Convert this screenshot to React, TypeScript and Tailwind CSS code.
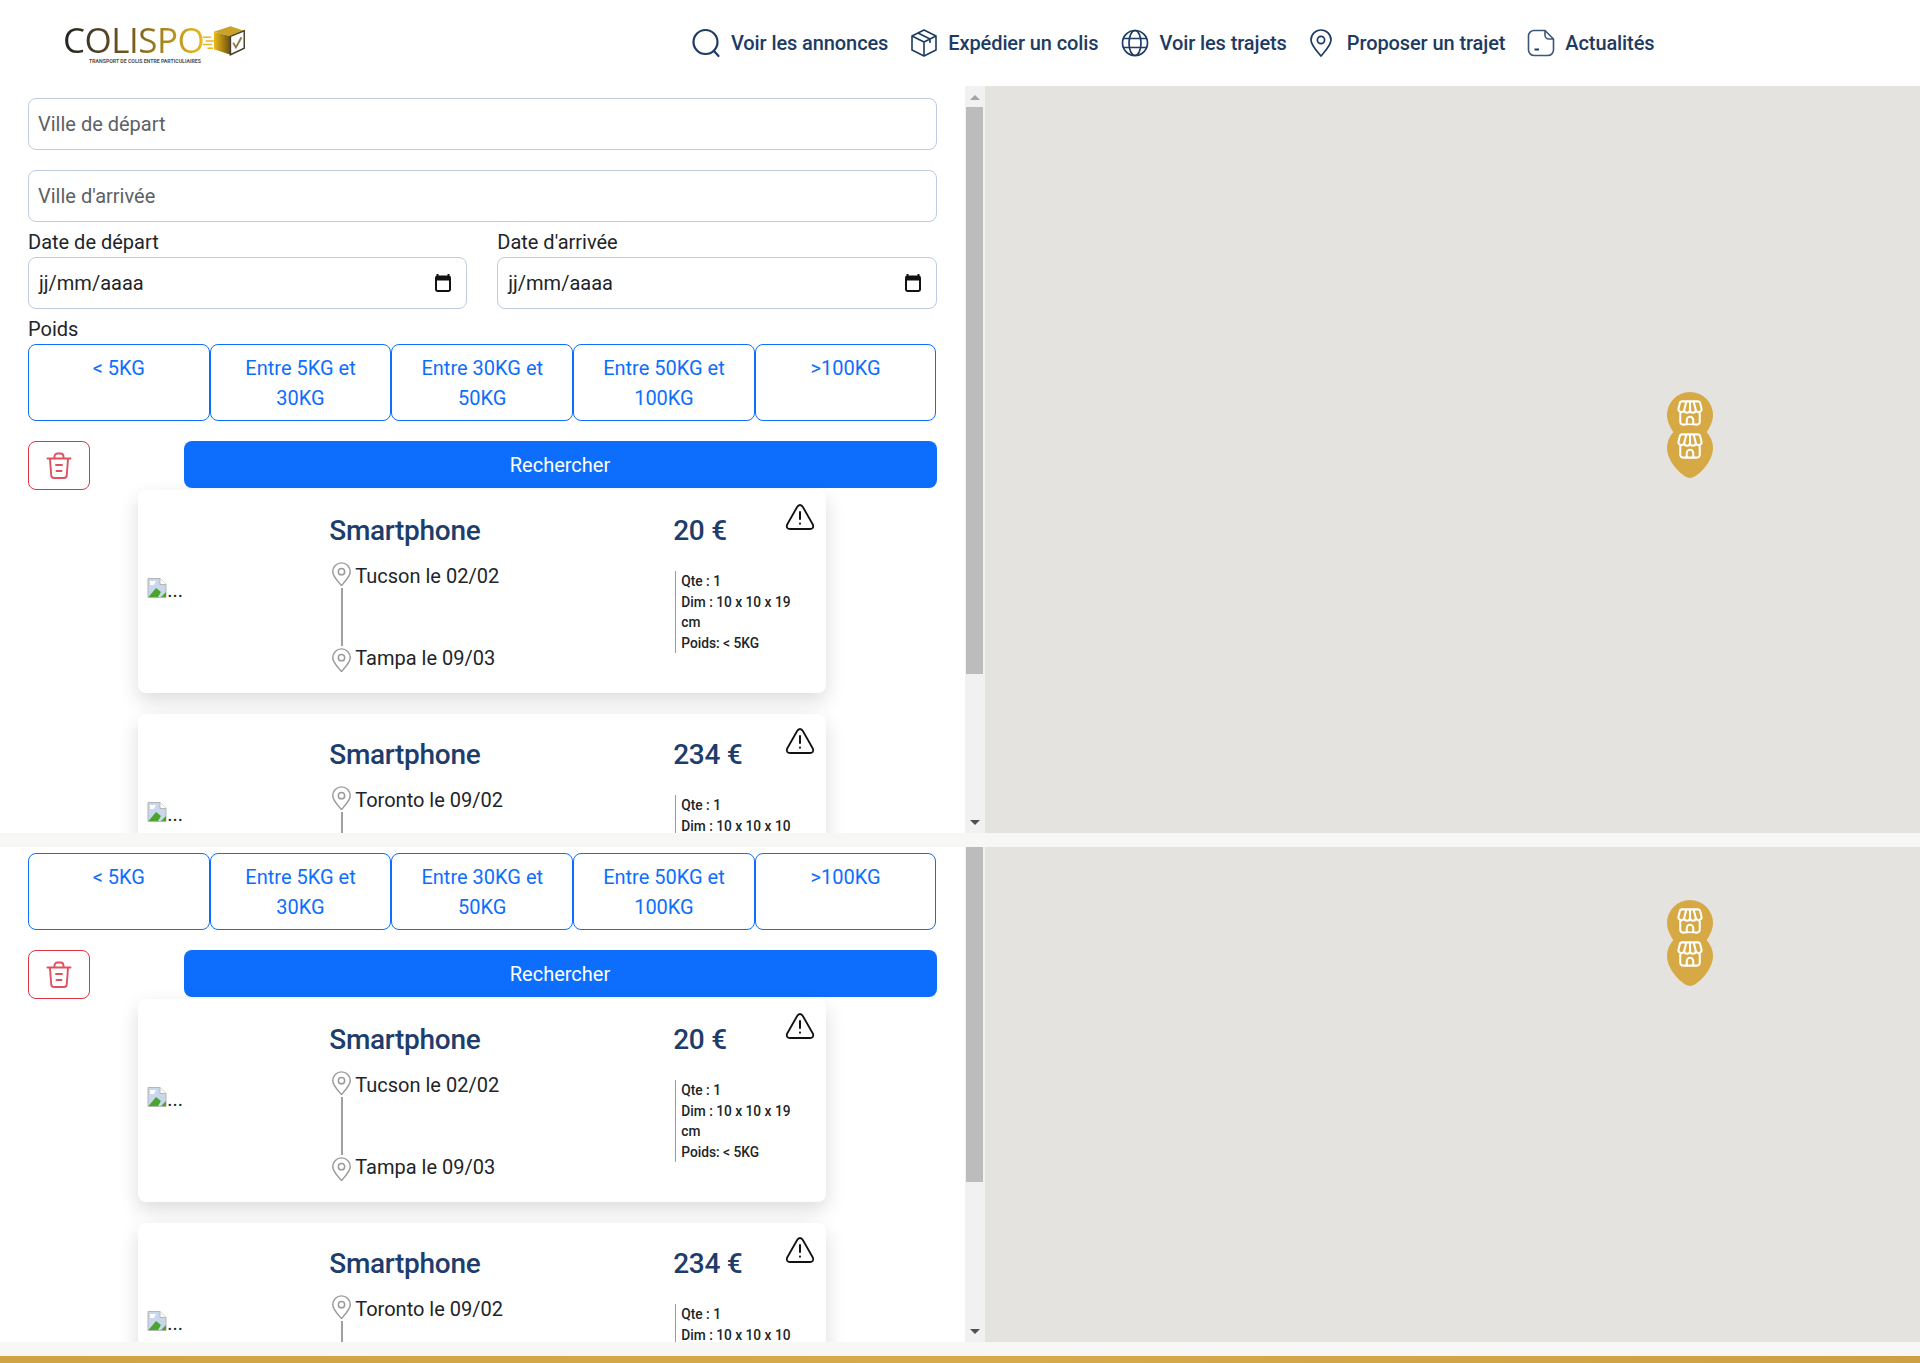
const WEIGHTS = ["< 5KG", "Entre 5KG et 30KG", "Entre 30KG et 50KG", "Entre 50KG et 100KG", ">100KG"];

const font = { fontFamily: "Roboto, sans-serif" };

type Offer = {
  price: string;
  from: string;
  to?: string;
  details: string[];
};

const OFFERS: Offer[] = [
  {
    price: "20 €",
    from: "Tucson le 02/02",
    to: "Tampa le 09/03",
    details: ["Qte : 1", "Dim : 10 x 10 x 19 cm", "Poids: < 5KG"],
  },
  {
    price: "234 €",
    from: "Toronto le 09/02",
    details: ["Qte : 1", "Dim : 10 x 10 x 10"],
  },
];

function Logo() {
  return (
    <div className="flex items-start">
      <div className="flex flex-col">
        <span
          className="bg-linear-to-r from-[#222222] via-[#7a5e1c] to-[#ecbc1a] bg-clip-text text-[35px] leading-[36px] tracking-[-0.5px] text-transparent"
          style={{ fontFamily: "'Open Sans', sans-serif" }}
        >
          COLISPO
        </span>
        <span className="pl-[26px] text-[5.2px] leading-[6px] font-bold whitespace-nowrap text-[#55504a]">
          TRANSPORT DE COLIS ENTRE PARTICULIAIRES
        </span>
      </div>
      <svg width="46" height="32" viewBox="0 0 50 34" className="mt-[2px] ml-[-3px]">
        <defs>
          <linearGradient id="boxfill" x1="0" x2="1" y1="0" y2="0">
            <stop offset="0" stopColor="#ecbc1a" />
            <stop offset="1" stopColor="#6b4f10" />
          </linearGradient>
        </defs>
        <path d="M2 14h9M5 18h9M2 22h10M7 26h6" stroke="#e8b81c" strokeWidth="1.6" />
        <path d="M14 8 L32 2 L47 7 L32 13 Z" fill="#c9a227" />
        <path d="M14 8 L32 13 V33 L14 27 Z" fill="url(#boxfill)" />
        <path d="M32 13 L47 7 V26 L32 33 Z" fill="#fff" stroke="#4a4030" strokeWidth="1.6" />
        <path d="M35 20 L38 25 L44 14" fill="none" stroke="#8a7a4a" strokeWidth="2" />
      </svg>
    </div>
  );
}

function SearchIcon() {
  return (
    <svg width="30" height="30" viewBox="0 0 30 30" fill="none" stroke="#1d3b63" strokeWidth="2.2" strokeLinecap="round">
      <circle cx="14.5" cy="14" r="12" />
      <path d="M23 23l4.5 5" />
    </svg>
  );
}

function BoxIcon() {
  return (
    <svg width="28" height="30" viewBox="0 0 28 30" fill="none" stroke="#1d3b63" strokeWidth="1.6" strokeLinejoin="round">
      <path d="M14 2 L26 8 V22 L14 28 L2 22 V8 Z" />
      <path d="M2 8 L14 14 L26 8 M14 14 V28 M8 5 L20 11 V15" />
    </svg>
  );
}

function GlobeIcon() {
  return (
    <svg width="28" height="28" viewBox="0 0 28 28" fill="none" stroke="#1d3b63" strokeWidth="1.7">
      <circle cx="14" cy="14" r="12.5" />
      <ellipse cx="14" cy="14" rx="6" ry="12.5" />
      <path d="M2.5 9.5h23M2.5 18.5h23" />
    </svg>
  );
}

function PinIcon({ color = "#1d3b63", size = 24 }: { color?: string; size?: number }) {
  return (
    <svg width={size} height={(size * 28) / 24} viewBox="0 0 24 28" fill="none" stroke={color} strokeWidth="1.7" className="shrink-0">
      <path d="M12 27 C7 21 2 16 2 11 A10 10 0 0 1 22 11 C22 16 17 21 12 27 Z" strokeLinejoin="round" />
      <circle cx="12" cy="11" r="3.6" />
    </svg>
  );
}

function NoteIcon() {
  return (
    <svg width="28" height="28" viewBox="0 0 28 28" fill="none" stroke="#3c5578" strokeWidth="1.6" strokeLinejoin="round">
      <path d="M7 1.5 H18 L26.5 10 V21 A5.5 5.5 0 0 1 21 26.5 H7 A5.5 5.5 0 0 1 1.5 21 V7 A5.5 5.5 0 0 1 7 1.5 Z" />
      <path d="M18 1.5 V6 A4 4 0 0 0 22 10 H26.5" />
      <path d="M7.5 20.5 H12" strokeWidth="2" stroke="#1d3b63" />
    </svg>
  );
}

function NavItem({ icon, label, gap }: { icon: React.ReactNode; label: string; gap: string }) {
  return (
    <a className={`flex items-center text-[20px] leading-[30px] font-medium tracking-[-0.1px] whitespace-nowrap text-[#1d3b63] ${gap}`}>
      {icon}
      {label}
    </a>
  );
}

function Header() {
  return (
    <header className="flex h-[86px] items-start bg-white">
      <div className="w-[691px] shrink-0 pt-[22px] pl-[63px]">
        <Logo />
      </div>
      <nav className="flex items-center gap-[22px] pt-[28px]">
        <NavItem icon={<SearchIcon />} label="Voir les annonces" gap="gap-[10px]" />
        <NavItem icon={<BoxIcon />} label="Expédier un colis" gap="gap-[10px]" />
        <NavItem icon={<GlobeIcon />} label="Voir les trajets" gap="gap-[11px]" />
        <NavItem icon={<PinIcon />} label="Proposer un trajet" gap="gap-[14px]" />
        <NavItem icon={<NoteIcon />} label="Actualités" gap="gap-[10px]" />
      </nav>
    </header>
  );
}

function CalendarIcon() {
  return (
    <svg width="18" height="20" viewBox="0 0 18 20" className="shrink-0">
      <path d="M3.5 1v2M14.5 1v2" stroke="#111" strokeWidth="2" />
      <rect x="2" y="3.5" width="14" height="14.5" rx="1.4" fill="none" stroke="#111" strokeWidth="2" />
      <rect x="2" y="3.5" width="14" height="4" fill="#111" />
    </svg>
  );
}

function TextField({ placeholder }: { placeholder: string }) {
  return (
    <input
      type="text"
      placeholder={placeholder}
      className="h-[52px] w-full rounded-lg border border-[#bfcbe2] bg-white px-[9px] text-[20px] text-[#212529] outline-none placeholder:text-[#5c6166]"
    />
  );
}

function DateField({ label }: { label: string }) {
  return (
    <div>
      <label className="block h-[35px] pt-[5px] text-[20px] leading-[30px] text-[#212529]">{label}</label>
      <div className="flex h-[52px] items-center justify-between rounded-lg border border-[#bfcbe2] bg-white pr-[14px] pl-[10px] text-[20px] text-[#212529]">
        jj/mm/aaaa
        <CalendarIcon />
      </div>
    </div>
  );
}

function WeightButtons() {
  return (
    <div className="grid grid-cols-5">
      {WEIGHTS.map((weight) => (
        <button
          key={weight}
          type="button"
          className="flex h-[77px] justify-center rounded-lg border border-[#0d6efd] bg-white px-[15px] pt-[8px] text-[20px] leading-[30px] text-[#0d6efd]"
        >
          {weight}
        </button>
      ))}
    </div>
  );
}

function TrashIcon() {
  return (
    <svg width="26" height="28" viewBox="0 0 26 28" fill="none" stroke="#e0505f" strokeWidth="1.9" strokeLinecap="round" strokeLinejoin="round">
      <path d="M1.5 6.5 H24.5" />
      <path d="M8.5 6 V4.5 A3 3 0 0 1 11.5 1.5 H14.5 A3 3 0 0 1 17.5 4.5 V6" />
      <path d="M4 7 L5.2 23 A3 3 0 0 0 8.2 26 H17.8 A3 3 0 0 0 20.8 23 L22 7" />
      <path d="M10 13 H16 M10.5 19 H15.5" />
    </svg>
  );
}

function FilterActions() {
  return (
    <div className="mt-5 flex items-start justify-between">
      <button
        type="button"
        className="flex h-[49px] w-[62px] items-center justify-center rounded-lg border border-[#dc3545] bg-white"
      >
        <TrashIcon />
      </button>
      <button
        type="button"
        className="h-[47px] w-[753px] rounded-lg bg-[#0d6efd] text-[20px] font-normal text-white"
      >
        Rechercher
      </button>
    </div>
  );
}

function BrokenImage() {
  return (
    <span className="mb-[5px] flex items-end text-[20px] leading-[20px] text-[#212529]">
      <svg width="20" height="20" viewBox="0 0 20 20" className="mb-[2px]">
        <path d="M1 0.5 H13 L19 6.5 V19.5 H1 Z" fill="#c9d7ec" stroke="#b5b5b5" />
        <path d="M13 0.5 V6.5 H19" fill="#fff" stroke="#b5b5b5" />
        <path d="M3 3 H9 L7 7 H3 Z" fill="#fff" />
        <path d="M1.5 19 L9 10 L14 14 L11 19 Z" fill="#4aa52c" />
        <path d="M14 19 L19 14 V19 Z" fill="#4aa52c" />
      </svg>
      ...
    </span>
  );
}

function WarningIcon() {
  return (
    <svg width="30" height="28" viewBox="0 0 30 28" fill="none" stroke="#111" strokeWidth="1.8" strokeLinecap="round" strokeLinejoin="round">
      <path d="M15 2 C16.5 2 17.3 3 18 4.2 L27.8 21.5 C29 24 27.6 26 25 26 H5 C2.4 26 1 24 2.2 21.5 L12 4.2 C12.7 3 13.5 2 15 2 Z" />
      <path d="M15 9 V16 M15 20.5 V20.7" strokeWidth="2" />
    </svg>
  );
}

function OfferCard({ offer }: { offer: Offer }) {
  return (
    <article className="relative mx-auto grid h-[203px] w-[688px] shrink-0 grid-cols-[182px_344px_1fr] items-start rounded-lg bg-white pl-[9px] shadow-[0_8px_20px_rgba(0,0,0,0.14)]">
      <div className="self-center">
        <BrokenImage />
      </div>
      <div className="pt-[21px]">
        <h3 className="text-[28px] leading-[40px] font-medium tracking-[-0.3px] text-[#1e3d6b]">Smartphone</h3>
        <div className="mt-[13px] flex flex-col">
          <p className="flex h-[24px] items-center gap-[3px] text-[20px] leading-[24px] text-[#212529]">
            <span className="ml-[2px] -translate-y-[2px]">
              <PinIcon color="#9a9a9a" size={21} />
            </span>
            {offer.from}
          </p>
          <span className="ml-[12px] h-[58px] w-[2px] bg-[#a0a0a0]" />
          {offer.to && (
            <p className="flex h-[24px] items-center gap-[3px] text-[20px] leading-[24px] text-[#212529]">
              <span className="ml-[2px] translate-y-[2px]">
                <PinIcon color="#9a9a9a" size={21} />
              </span>
              {offer.to}
            </p>
          )}
        </div>
      </div>
      <div className="pt-[21px]">
        <p className="text-[28px] leading-[40px] font-medium tracking-[-0.3px] text-[#1e3d6b]">{offer.price}</p>
        <div className="mt-[20px] ml-[2px] w-[128px] border-l border-[#9a9a9a] pl-[5px] text-[13.75px] leading-[20.5px] font-medium text-[#212529]">
          {offer.details.map((detail) => (
            <p key={detail}>{detail}</p>
          ))}
        </div>
      </div>
      <span className="absolute top-[13px] right-[11px]">
        <WarningIcon />
      </span>
    </article>
  );
}

function Filters() {
  return (
    <>
      <div className="flex flex-col gap-5">
        <TextField placeholder="Ville de départ" />
        <TextField placeholder="Ville d'arrivée" />
      </div>
      <div className="grid grid-cols-2 gap-[30px]">
        <DateField label="Date de départ" />
        <DateField label="Date d'arrivée" />
      </div>
      <label className="block h-[35px] pt-[5px] text-[20px] leading-[30px] text-[#212529]">Poids</label>
    </>
  );
}

function Scrollbar({ thumbTop, thumbHeight, showUp }: { thumbTop: number; thumbHeight: number; showUp: boolean }) {
  return (
    <div className="flex w-[20.5px] shrink-0 flex-col items-center bg-[#f1f1f1]">
      {showUp && (
        <span className="mt-[9px] h-0 w-0 border-x-[5px] border-b-[5px] border-x-transparent border-b-[#a3a3a3]" />
      )}
      <span className="w-[17px] bg-[#bcbcbc]" style={{ marginTop: thumbTop, height: thumbHeight }} />
      <span className="mt-auto mb-[8px] h-0 w-0 border-x-[5px] border-t-[5px] border-x-transparent border-t-[#505050]" />
    </div>
  );
}

function ShopGlyph() {
  return (
    <svg width="26" height="26" viewBox="0 0 28 28" fill="none" stroke="#fff" strokeWidth="2.2" strokeLinejoin="round">
      <path d="M5.5 1.5 H22.5 A2.5 2.5 0 0 1 25 3.5 L26.5 10 A3.2 3.2 0 0 1 20.3 11 A3.2 3.2 0 0 1 14 11 A3.2 3.2 0 0 1 7.7 11 A3.2 3.2 0 0 1 1.5 10 L3 3.5 A2.5 2.5 0 0 1 5.5 1.5 Z" />
      <path d="M10 2 L7.7 11 M18 2 L20.3 11 M14 2 V11" />
      <path d="M3.5 14 V23.5 A3 3 0 0 0 6.5 26.5 H21.5 A3 3 0 0 0 24.5 23.5 V14" />
      <path d="M10.5 26 V21.5 A3.5 3.5 0 0 1 17.5 21.5 V26" />
    </svg>
  );
}

function Marker({ top }: { top: number }) {
  return (
    <div className="absolute left-[682px]" style={{ top }}>
      <div className="relative h-[54px] w-[46px]">
        <svg width="46" height="54" viewBox="0 0 46 54" className="absolute inset-0">
          <path d="M23 53 C16 53 0 37 0 23 A23 23 0 0 1 46 23 C46 37 30 53 23 53 Z" fill="#d6a945" />
        </svg>
        <span className="absolute top-[8px] left-[10px]">
          <ShopGlyph />
        </span>
      </div>
    </div>
  );
}

function MapPane({ markerTop }: { markerTop: number }) {
  return (
    <div className="relative flex-1 bg-[#e5e3df]">
      <Marker top={markerTop} />
      <Marker top={markerTop + 33} />
    </div>
  );
}

function Section({ full, height }: { full: boolean; height: number }) {
  return (
    <section className="flex overflow-hidden bg-white" style={{ height }}>
      <div className={`w-[964.5px] shrink-0 overflow-hidden px-7 ${full ? "pt-3" : "pt-[6px]"}`}>
        {full && <Filters />}
        <WeightButtons />
        <FilterActions />
        <div className="flex flex-col gap-[21px]">
          {OFFERS.map((offer) => (
            <OfferCard key={offer.from} offer={offer} />
          ))}
        </div>
      </div>
      {full ? (
        <Scrollbar thumbTop={7} thumbHeight={567} showUp />
      ) : (
        <Scrollbar thumbTop={0} thumbHeight={335} showUp={false} />
      )}
      <MapPane markerTop={full ? 306 : 53} />
    </section>
  );
}

export default function App() {
  return (
    <div className="h-[1363px] overflow-hidden bg-[#f7f7f5]" style={font}>
      <Header />
      <Section full height={747} />
      <div className="h-[14px]" />
      <Section full={false} height={495} />
      <div className="h-[14px]" />
      <div className="h-[7px] bg-linear-to-r from-[#cfa244] via-[#d6aa4b] to-[#cda043]" />
    </div>
  );
}
